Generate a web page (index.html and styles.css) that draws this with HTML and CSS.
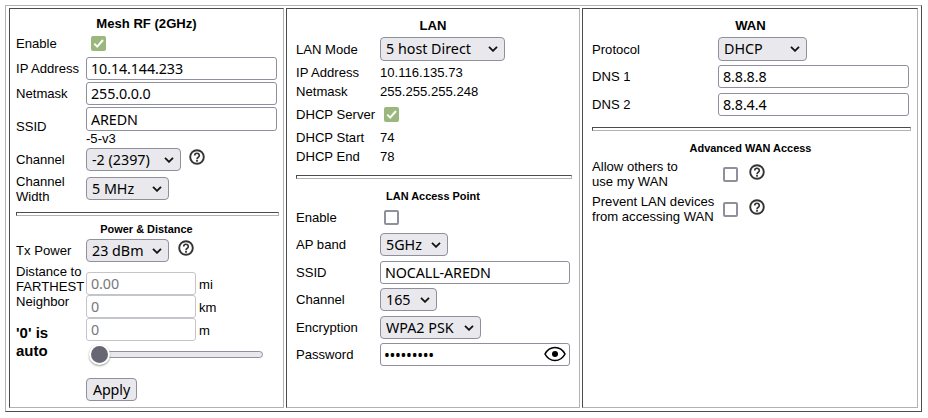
FILE: index.html
```html
<!DOCTYPE html>
<html lang="en">
<head>
<meta charset="utf-8">
<title>Basic Setup</title>
<link rel="stylesheet" href="styles.css">
</head>
<body>
<svg class="defs" aria-hidden="true">
  <symbol id="chev" viewBox="0 0 10 6"><path d="M1 0.8 L5 4.8 L9 0.8" fill="none" stroke="#111" stroke-width="1.8"/></symbol>
  <symbol id="help" viewBox="0 0 16 16"><circle cx="8" cy="8" r="6.8" fill="none" stroke="#333" stroke-width="1.9"/><path d="M5.7 6.5 a2.3 2.2 0 1 1 3.6 1.8 C8.4 8.9 8 9.2 8 10.2" fill="none" stroke="#333" stroke-width="1.7"/><rect x="7.1" y="11" width="1.8" height="1.7" fill="#333"/></symbol>
</svg>
<main class="frame">
  <section class="cell mesh">
    <h2>Mesh RF (2GHz)</h2>
    <div class="row h25"><label>Enable</label><span class="check on"><svg viewBox="0 0 15 15"><path d="M3.3 7.6 L6.2 10.6 L12 4" /></svg></span></div>
    <div class="row h25"><label>IP Address</label><input class="wide" value="10.14.144.233"></div>
    <div class="row h25"><label>Netmask</label><input class="wide" value="255.0.0.0"></div>
    <div class="row h41"><label>SSID</label><div class="stack"><input class="wide tall" value="AREDN"><span>-5-v3</span></div></div>
    <div class="row h25"><label>Channel</label><span class="sel w95"><select><option>-2 (2397)</option></select><svg><use href="#chev"/></svg></span><svg class="help"><use href="#help"/></svg></div>
    <div class="row h33"><label>Channel<br>Width</label><span class="sel w83"><select><option>5 MHz</option></select><svg><use href="#chev"/></svg></span></div>
    <hr>
    <h3>Power &amp; Distance</h3>
    <div class="row h27"><label>Tx Power</label><span class="sel w83"><select><option>23 dBm</option></select><svg><use href="#chev"/></svg></span><svg class="help"><use href="#help"/></svg></div>
    <div class="row distance">
      <label>Distance to FARTHEST Neighbor<strong>'0' is auto</strong></label>
      <div class="stack">
        <div class="unit"><input disabled value="0.00"><span>mi</span></div>
        <div class="unit"><input disabled value="0"><span>km</span></div>
        <div class="unit"><input disabled value="0"><span>m</span></div>
        <div class="slider"><i class="thumb"></i><i class="track"></i></div>
        <button>Apply</button>
      </div>
    </div>
  </section>

  <section class="cell lan">
    <h2>LAN</h2>
    <div class="row h28"><label>LAN Mode</label><span class="sel w125 tall"><select><option>5 host Direct</option></select><svg><use href="#chev"/></svg></span></div>
    <div class="row h19"><label>IP Address</label><span>10.116.135.73</span></div>
    <div class="row h19"><label>Netmask</label><span>255.255.255.248</span></div>
    <div class="row h27"><label>DHCP Server</label><span class="check on"><svg viewBox="0 0 15 15"><path d="M3.3 7.6 L6.2 10.6 L12 4" /></svg></span></div>
    <div class="row h19"><label>DHCP Start</label><span>74</span></div>
    <div class="row h19"><label>DHCP End</label><span>78</span></div>
    <hr>
    <h3>LAN Access Point</h3>
    <div class="row h27"><label>Enable</label><span class="check"></span></div>
    <div class="row h27"><label>AP band</label><span class="sel w68"><select><option>5GHz</option></select><svg><use href="#chev"/></svg></span></div>
    <div class="row h29"><label>SSID</label><input class="wide" value="NOCALL-AREDN"></div>
    <div class="row h25"><label>Channel</label><span class="sel w57"><select><option>165</option></select><svg><use href="#chev"/></svg></span></div>
    <div class="row h31"><label>Encryption</label><span class="sel w101"><select><option>WPA2 PSK</option></select><svg><use href="#chev"/></svg></span></div>
    <div class="row h23"><label>Password</label><span class="secret"><input class="wide" type="password" value="123456789"><svg viewBox="0 0 22 16"><path d="M1 8 C5.5 -0.7 16.5 -0.7 21 8 C16.5 16.7 5.5 16.7 1 8 Z" fill="#fff" stroke="#000" stroke-width="1.6"/><circle cx="11" cy="8" r="3"/></svg></span></div>
  </section>

  <section class="cell wan">
    <h2>WAN</h2>
    <div class="row h28"><label>Protocol</label><span class="sel w89 tall"><select><option>DHCP</option></select><svg><use href="#chev"/></svg></span></div>
    <div class="row h27"><label>DNS 1</label><input class="wide" value="8.8.8.8"></div>
    <div class="row h29"><label>DNS 2</label><input class="wide" value="8.8.4.4"></div>
    <hr>
    <h3>Advanced WAN Access</h3>
    <div class="row h37"><label>Allow others to<br>use my WAN</label><span class="check"></span><svg class="help"><use href="#help"/></svg></div>
    <div class="row h33"><label>Prevent LAN devices<br>from accessing WAN</label><span class="check"></span><svg class="help"><use href="#help"/></svg></div>
  </section>
</main>
</body>
</html>
```
FILE: styles.css
```css
* { box-sizing: border-box; }
body {
  margin: 0;
  background: #fff;
  color: #000;
  font: 13.1px/15px "Liberation Sans", Arial, sans-serif;
}
.defs { display: none; }
.frame {
  display: grid;
  grid-template-columns: 275px 294px 336px;
  gap: 2px;
  width: 917px;
  height: 407px;
  margin: 5px 0 0 5px;
  padding: 2px 3px;
  border: 1px solid;
  border-color: #b2b2b2 #4c4c4c #4c4c4c #b2b2b2;
}
.cell {
  --label: 70px;
  display: flex;
  flex-direction: column;
  height: 400px;
  border: 1px solid;
  border-color: #4c4c4c #b2b2b2 #b2b2b2 #4c4c4c;
}
.mesh { padding: 7px 4px 0 6px; }
.lan { --label: 84px; padding: 9px 7px 0 9px; }
.wan { --label: 126px; padding: 9px 6px 0 9px; }

h2, h3 { margin: 0; text-align: center; font-weight: bold; line-height: 15px; padding-right: 2px; }
h2 { font-size: 13.1px; }
h3 { font-size: 10.95px; }
.lan h2, .wan h2 { margin-bottom: 2px; }
.mesh h3 { margin-top: 6px; }
.lan h3, .wan h3 { margin-top: 10px; }

hr {
  width: 100%;
  height: 4px;
  margin: 0;
  border: 1px solid;
  border-color: #4c4c4c #b2b2b2 #b2b2b2 #4c4c4c;
}
.mesh hr { margin-top: 7px; }
.lan hr { margin-top: 9px; }
.wan hr { margin-top: 8px; }

.row { display: flex; align-items: center; flex: none; }
.row > label { flex: 0 0 var(--label); white-space: nowrap; }
.h19 { height: 19px; }
.h23 { height: 23px; }
.h25 { height: 25px; }
.h27 { height: 27px; }
.h28 { height: 28px; }
.h29 { height: 29px; }
.h31 { height: 31px; }
.h33 { height: 33px; }
.h37 { height: 37px; }
.h41 { height: 41px; }
.wan .h37 > label, .wan .h33 > label { margin-top: -1px; }

input, select, button {
  height: 23px;
  margin: 0;
  border: 1px solid #8f8f9d;
  color: #000;
  font: 14.3px/18px "Noto Sans", "Open Sans", sans-serif;
  letter-spacing: -0.1px;
}
input { padding: 0 4px; border-radius: 3px; background: #fff; }
input.wide { width: 191px; }
.lan input.wide { width: 190px; }
input.tall { height: 24px; }
input:disabled { width: 110px; border-color: #c4c4cb; color: #77777c; }
.stack { display: flex; flex-direction: column; align-items: flex-start; }

.sel { position: relative; display: block; height: 23px; }
.sel.tall { height: 24px; }
.sel select {
  appearance: none;
  width: 100%;
  height: 100%;
  padding: 0 5px;
  border-radius: 4px;
  background: #e9e9ed;
  letter-spacing: 0;
}
.sel svg { position: absolute; right: 7px; top: 9px; width: 10px; height: 6px; }
.w57 { width: 57px; }
.w68 { width: 68px; }
.w83 { width: 83px; }
.w89 { width: 89px; }
.w95 { width: 95px; }
.w101 { width: 101px; }
.w125 { width: 125px; }

.check {
  width: 15px;
  height: 15px;
  margin-left: 5px;
  border: 2px solid #8f8f9d;
  border-radius: 2px;
}
.lan .check { margin-left: 4px; }
.check.on { border: 0; background: #9bb77d; }
.check svg { display: block; width: 15px; height: 15px; }
.check path { fill: none; stroke: #fff; stroke-width: 2; }
.help { width: 16px; height: 16px; margin: -6px 0 0 8px; }
.mesh .w83 + .help { margin-left: 9px; }
.wan .help { margin-left: 11px; }

.distance { align-items: flex-start; }
.distance > label { white-space: normal; }
.distance strong { display: block; width: 45px; margin-top: 15px; font-size: 15px; line-height: 18px; }
.distance .stack { padding-top: 8px; }
.unit { display: flex; align-items: center; gap: 3px; }
.unit span { padding-top: 1px; }
.slider { display: flex; align-items: center; height: 21px; margin: 3px 0 13px 3px; }
.thumb {
  z-index: 1;
  width: 21px;
  height: 21px;
  border: 2px solid #fff;
  border-radius: 50%;
  background: #676774;
  box-shadow: 0 1px 2px #999;
}
.track {
  width: 160px;
  height: 7px;
  margin-left: -7px;
  border: 1px solid #8f8f9d;
  border-radius: 4px;
  background: #e9e9ed;
}
button { width: 51px; padding: 0; border-radius: 4px; background: #e9e9ed; }

.secret { position: relative; display: block; height: 23px; }
.lan .secret input { padding-left: 3px; font-size: 15.5px; letter-spacing: -0.3px; }
.secret svg { position: absolute; right: 4px; top: 3px; width: 22px; height: 16px; }
```
